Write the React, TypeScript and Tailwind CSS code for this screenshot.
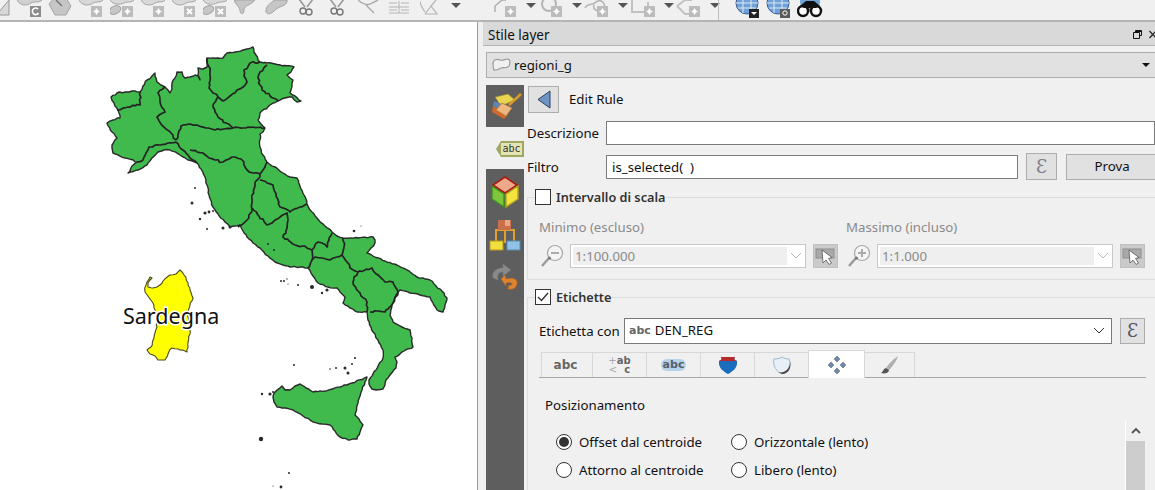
import React from "react";

const OUTLINE = "111,97 117,93 125,92 132,91 140,92 143,86 147,80 152,76 155,73 156,78 157,82 161,85 165,87 168,90 170,93 172,89 172,83 175,78 177,72 182,72 183,76 185,78 190,77 195,75 198,76 200,80 198,75 198,68 203,69 207,67 207,62 207,58 213,58 223,58 225,55 227,53 235,52 243,50 253,47 254,52 256,55 258,60 260,62 275,64 294,67 291,72 287,75 290,78 293,80 292,86 290,93 295,96 301,101 297,102 292,97 285,98 278,101 270,105 260,113 258,120 261,124 265,128 263,132 260,134 260,147 263,155 267,162 275,167 283,173 290,177 297,178 300,186 304,195 307,204 312,212 317,218 325,226 332,232 337,236 343,238 358,238 373,237 375,240 375,243 371,248 367,253 373,256 385,261 397,265 407,270 417,277 425,279 430,280 436,286 442,291 447,298 445,305 443,312 437,310 433,303 430,297 420,295 410,293 405,291 400,290 396,295 393,303 390,315 393,322 400,326 410,330 412,338 413,347 404,351 395,357 397,362 396,368 390,375 386,380 385,385 383,389 376,390 372,389 369,384 369,380 376,370 383,358 383,350 378,340 373,332 368,320 367,312 357,312 350,308 343,303 345,297 340,292 337,288 328,287 318,283 313,276 308,268 300,267 290,267 283,265 275,262 268,256 260,248 253,243 247,237 243,231 240,225 235,226 230,227 225,222 218,214 213,207 209,195 207,185 205,177 201,169 197,163 188,160 180,155 170,150 164,150 158,152 152,158 147,165 138,170 128,173 132,166 137,162 125,158 113,153 112,148 112,145 117,138 112,132 107,123 113,120 120,118 119,113 118,110 114,103 111,97";

const BORDERS = [
  "117,110 128,107 140,105 140,92",
  "165,87 158,93 160,102 165,112 157,117 161,124 165,128 171,133 176,140",
  "176,142 168,143 160,145 149,147 146,153 143,160 137,162",
  "176,142 183,150 190,158 197,163",
  "176,140 179,131 183,125 190,124 197,125 206,128 215,130 224,129 233,128",
  "207,58 210,72 209,88 213,93 218,97 223,101 230,96 237,90 243,87 247,82 244,76 244,70 250,63 260,62",
  "218,97 213,107 215,112 218,117 226,123 233,128",
  "267,65 260,72 258,78 260,85 262,90 270,96 278,101",
  "233,128 243,128 253,127 265,128",
  "190,150 197,152 203,153 209,158 215,160 223,162 229,159 235,157 241,159 244,162 245,167 247,170 253,173 260,174 263,170 265,167 267,162",
  "260,174 255,185 252,195 252,203 252,210 247,220 238,227",
  "260,180 267,183 273,185 276,196 280,207 286,209 290,212 300,207 307,204",
  "252,208 259,216 267,225 277,219 287,213 288,220 287,228 283,237 289,241 295,245 303,246 312,250 312,260 308,268",
  "332,233 329,240 327,247 322,243 318,242 312,250",
  "343,238 344,247 342,255 337,257 330,260 322,258 315,257 312,260",
  "342,255 347,262 350,268 358,272 354,277 353,282 358,291 367,302 367,312",
  "358,272 365,270 372,268 378,275 385,282 393,282 396,288 398,293 393,303 385,312 378,311 370,312",
];

const SICILY = "273,397 275,392 282,386 285,390 290,390 295,386 300,384 306,388 313,392 325,391 340,387 352,383 367,377 362,390 358,403 355,415 359,419 363,425 360,432 357,439 348,440 340,437 335,431 330,425 322,424 313,422 303,416 293,410 285,408 277,407 274,402";
const SARDINIA = "145,292 146,285 147,282 150,277 152,278 148,283 148,287 153,288 157,287 163,281 170,275 176,274 180,270 184,275 188,283 190,290 193,298 190,305 188,312 189,322 190,330 188,342 187,352 180,350 172,348 168,354 165,360 158,360 155,356 153,355 150,354 147,350 151,347 153,340 155,333 157,327 157,315 153,303";
const DOTS: [number, number, number][] = [[195,188,1],[192,203,1.5],[205,213,1.6],[209,212,1.4],[213,211,1],[200,219,1.2],[207,229,1],[223,228,1.5],[230,227,1.5],[268,244,1],[274,250,1],[354,231,1.3],[361,226,0.6],[281,281,1],[284,281,1],[287,279,0.7],[288,284,0.6],[298,285,1],[312,287,2],[322,293,1.2],[327,290,1.6],[294,365,1],[330,369,0.8],[336,368,1],[345,368,1.5],[348,373,1.5],[352,364,1],[355,358,1.1],[262,394,1.2],[270,394,1.6],[273,392,1],[261,439,2.2],[289,473,1],[281,487,1.4],[273,486,0.6]];

function jag(points: string, amp: number) {
  const pts = points.split(" ").map((p) => p.split(",").map(Number));
  const out: string[] = [];
  let seed = pts[0][0] * 7 + pts[0][1] * 13;
  const rnd = () => {
    seed = (seed * 9301 + 49297) % 233280;
    return seed / 233280 - 0.5;
  };
  pts.forEach((p, i) => {
    out.push(`${p[0]},${p[1]}`);
    const q = pts[i + 1];
    if (!q) return;
    const d = Math.hypot(q[0] - p[0], q[1] - p[1]);
    const n = Math.floor(d / 2.4);
    for (let k = 1; k < n; k++) {
      const t = k / n;
      out.push(`${(p[0] + (q[0] - p[0]) * t + rnd() * amp).toFixed(1)},${(p[1] + (q[1] - p[1]) * t + rnd() * amp).toFixed(1)}`);
    }
  });
  return out.join(" ");
}

function ItalyMap() {
  return (
    <svg viewBox="0 22 477 468" className="block w-full h-full">
      <polygon points={jag(OUTLINE, 1.3)} fill="#40ba4d" stroke="#2a2a2a" strokeWidth="1.4" strokeLinejoin="round" />
      {BORDERS.map((p, i) => (
        <polyline key={i} points={jag(p, 2)} fill="none" stroke="#232323" strokeWidth="1.7" strokeLinejoin="round" />
      ))}
      <polygon points={jag(SICILY, 1.2)} fill="#40ba4d" stroke="#2a2a2a" strokeWidth="1.4" strokeLinejoin="round" />
      <polygon points={jag(SARDINIA, 1.6)} fill="#ffff00" stroke="#4a4a20" strokeWidth="1.1" strokeLinejoin="round" />
      {DOTS.map(([x, y, r], i) => (
        <circle key={i} cx={x} cy={y} r={r} fill="#2a2a2a" />
      ))}
      <text x="123" y="323.5" stroke="#ffffff" strokeWidth="3" paintOrder="stroke" fill="#111111" className="font-['Noto_Sans',sans-serif] text-[21.5px]">Sardegna</text>
    </svg>
  );
}

const G = "#c6c6c6";
const S = "#a4a4a4";

function Badge({ x, kind, dark }: { x: number; kind: "star" | "x" | "arrow"; dark?: boolean }) {
  return (
    <g>
      <rect x={x} y="6" width="11" height="11" fill={dark ? "#8c8c8c" : "#bcbcbc"} />
      {kind === "star" && <path d={`M${x + 5.5} 8 L${x + 7} 10.5 L${x + 9} 11.5 L${x + 7} 12.5 L${x + 5.5} 15 L${x + 4} 12.5 L${x + 2} 11.5 L${x + 4} 10.5Z`} fill="#ffffff" />}
      {kind === "x" && <path d={`M${x + 3} 9 L${x + 8} 14 M${x + 8} 9 L${x + 3} 14`} stroke="#ffffff" strokeWidth="2" />}
      {kind === "arrow" && <path d={`M${x + 8} 9 A3.3 3.3 0 1 0 ${x + 8.5} 13`} stroke="#ffffff" strokeWidth="1.6" fill="none" />}
    </g>
  );
}

function ToolIcon({ type }: { type: number }) {
  return (
    <div className="w-[31px] h-[20px] shrink-0">
      <svg width="31" height="20" viewBox="0 0 31 20" className="block">
        {type === 0 && (<><path d="M0 0 C3 6 10 6 14 3 C18 1 22 3 25 0" fill="#d0d0d0" stroke={S} /><Badge x={13} kind="arrow" dark /></>)}
        {type === 1 && (<><path d="M1 4 L6 -2 L18 -2 L23 6 L18 15 L7 15Z" fill={G} stroke={S} /><path d="M8 0 L14 6" stroke="#777" strokeWidth="1.5" /></>)}
        {(type === 2 || type === 4 || type === 5) && (<><path d="M0 0 C3 6 10 6 14 3 C18 1 22 3 24 0" fill="#d8d8d8" stroke={S} /><Badge x={12} kind={type === 5 ? "x" : "star"} /></>)}
        {(type === 3 || type === 6) && (<><path d="M0 0 C3 5 10 5 14 3 C18 1 22 3 24 0" fill="#d8d8d8" stroke={S} /><ellipse cx="5" cy="10" rx="6" ry="4" transform="rotate(-25 5 10)" fill={G} stroke={S} /><Badge x={12} kind={type === 3 ? "star" : "x"} /></>)}
        {type === 7 && <path d="M0 0 C1 4 5 6 6 10 C6 15 10 15 10 10 C10 5 16 6 21 0Z" fill={G} stroke={S} />}
        {type === 8 && <path d="M22 0 C23 6 14 6 10 10 C6 15 0 15 1 10 C2 4 7 3 9 0Z" fill={G} stroke={S} />}
        {type === 9 && (<><path d="M3 -1 L9 7 M17 -1 L11 7" stroke="#999" strokeWidth="1.6" /><circle cx="7" cy="11" r="3" fill="none" stroke="#777" strokeWidth="1.4" /><circle cx="13" cy="12" r="3" fill="none" stroke="#777" strokeWidth="1.4" /></>)}
        {type === 10 && <path d="M0 0 C4 4 10 6 14 3 L20 0 M8 5 L16 13" fill="none" stroke="#aaa" strokeWidth="1.4" />}
        {type === 11 && <path d="M0 3 H8 M12 3 H20 M0 7 H20 M0 10 H8 M12 10 H20 M0 13 H20 M10 1 V13" fill="none" stroke="#b4b4b4" />}
        {type === 12 && <path d="M0 1 C0 5 3 9 5 12 M5 14 H17 L11 6 L16 0 M5 14 L11 6" fill="none" stroke="#b4b4b4" strokeWidth="1.2" />}
      </svg>
    </div>
  );
}

function Caret() {
  return <div className="w-0 h-0 border-x-[5px] border-x-transparent border-t-[5px] border-t-[#555555]" />;
}

function NodeTool({ type }: { type: number }) {
  return (
    <div className="w-[46px] h-[20px] shrink-0 flex items-start">
      <svg width="33" height="20" viewBox="0 0 33 20" className="block shrink-0">
        {type === 0 && <path d="M3 12 V6 L10 0 H14" fill="none" stroke="#aaa" strokeWidth="1.4" />}
        {type === 1 && <circle cx="11" cy="4" r="7" fill="none" stroke="#b5b5b5" strokeWidth="2" />}
        {type === 2 && <path d="M1 8 C4 2 9 6 12 2 C16 -1 22 2 20 8 C18 12 8 12 10 5" fill="none" stroke="#b5b5b5" strokeWidth="1.6" />}
        {type === 3 && <path d="M2 0 V12 H18 V2" fill="none" stroke="#c2c2c2" strokeWidth="2" />}
        {type === 4 && <path d="M1 6 L9 0 H16 M1 6 L9 14 H16" fill="none" stroke="#c2c2c2" strokeWidth="2" />}
        <Badge x={type === 0 ? 13 : type === 3 ? 14 : 13} kind="star" />
      </svg>
      <div className="ml-[1px] mt-[3px]"><Caret /></div>
    </div>
  );
}

function Globe({ badge }: { badge: "down" | "zoom" }) {
  return (
    <svg width="25" height="20" viewBox="0 0 25 20" className="block shrink-0">
      <circle cx="12" cy="3" r="11" fill="#6fa0d8" stroke="#3b5e8c" />
      <path d="M1 3 H23 M3 -2 H21 M3 8 H21 M8 -6 V13 M16 -6 V13" stroke="#dfeaf6" strokeWidth="1" />
      <rect x="14" y="9" width="10" height="9" fill={badge === "down" ? "#222" : "#5a5a5a"} />
      {badge === "down" ? <path d="M16 12 H22 L19 15Z" fill="#fff" /> : <circle cx="19" cy="13" r="2.2" fill="none" stroke="#fff" />}
    </svg>
  );
}

function Toolbar() {
  return (
    <div className="h-[22px] shrink-0 flex bg-[#f0f0f0] border-b-2 border-[#b4b4b4] overflow-hidden">
      <svg width="17" height="20" viewBox="0 0 17 20" className="block shrink-0">
        <path d="M-1 12 L9 0 V15 H-1Z" fill="#d8d8d8" stroke="#999" />
      </svg>
      {[0, 1, 2, 3, 4, 5, 6, 7, 8, 9, 9, 10, 11, 12].map((t, i) => (
        <ToolIcon key={i} type={t} />
      ))}
      <div className="w-[28px] pt-[3px]"><Caret /></div>
      <div className="w-[13px]" />
      {[0, 1, 2, 3, 4].map((t) => (
        <NodeTool key={t} type={t} />
      ))}
      <div className="w-[1px] h-[20px] bg-[#bdbdbd] -ml-[4px]" />
      <div className="flex gap-[6px] ml-[16px]">
        <Globe badge="down" />
        <Globe badge="zoom" />
        <svg width="26" height="20" viewBox="0 0 26 20" className="block shrink-0">
          <circle cx="13" cy="2" r="10" fill="#6fa0d8" />
          <circle cx="6" cy="11" r="5" fill="#fff" stroke="#111" strokeWidth="2.4" />
          <circle cx="19" cy="11" r="5" fill="#fff" stroke="#111" strokeWidth="2.4" />
          <path d="M3 6 L9 1 H17 L23 6 L19 8 H7Z" fill="#111" />
        </svg>
      </div>
    </div>
  );
}

function BrushIcon() {
  return (
    <svg width="34" height="30" viewBox="0 0 34 30">
      <path d="M7 6 L20 3 L27 9 L13 15Z" fill="#e8d44f" stroke="#8a8030" strokeWidth="0.6" />
      <path d="M6 10 L16 14 L12 19 L5 15Z" fill="#5e86b4" />
      <path d="M5 15 L20 24 L16 28 L4 21Z" fill="#cf6a2c" />
      <path d="M14 12 L24 17 L18 25 L8 19Z" fill="#edb77e" stroke="#b87a3c" strokeWidth="0.8" />
      <path d="M21 14 L33 3" stroke="#d99a2b" strokeWidth="2.6" />
    </svg>
  );
}

function CubeIcon() {
  return (
    <svg width="28" height="32" viewBox="0 0 28 32">
      <path d="M14 1 L26 9 L14 17 L2 9Z" fill="#eda98a" stroke="#a81d12" strokeWidth="1.6" />
      <path d="M1 10 L13 18 V31 L1 23Z" fill="#7ec63c" stroke="#3f8f1f" strokeWidth="1.4" />
      <path d="M27 10 L15 18 V31 L27 23Z" fill="#f4e33c" stroke="#b0a020" strokeWidth="1.4" />
    </svg>
  );
}

function HierIcon() {
  return (
    <svg width="32" height="32" viewBox="0 0 32 32">
      <path d="M7 22 V11 H25 V22 M16 11 V24" fill="none" stroke="#e0a030" strokeWidth="2" />
      <rect x="9" y="1" width="13" height="10" fill="#c9704a" />
      <rect x="16" y="1" width="5" height="6" fill="#e8a888" />
      <rect x="1" y="22" width="13" height="9" fill="#f0df3c" stroke="#b79a20" />
      <rect x="18" y="22" width="13" height="9" fill="#8ec2e6" stroke="#5a8ab0" />
    </svg>
  );
}

function UndoIcon() {
  return (
    <svg width="28" height="28" viewBox="0 0 28 28">
      <path d="M2 16 C0 8 8 6 12 6 L12 2 L20 8 L12 14 L12 10 C8 10 6 12 7 18 Z" fill="#8a8a8a" stroke="#777" strokeWidth="0.6" />
      <path d="M10 17 L14 13 L15 17 C22 15 27 17 26 22 C25 27 20 28 17 27 L18 23 C21 24 22 22 20 21 C18 20 16 21 15 21 L15 24Z" fill="#dd8430" stroke="#b8651c" strokeWidth="0.6" />
    </svg>
  );
}

function Sidebar() {
  return (
    <div className="w-[38px] shrink-0 flex flex-col">
      <div className="h-[42px] bg-[#5e5e5e] flex items-center justify-center"><BrushIcon /></div>
      <div className="h-[42px] flex items-center justify-end pt-[1px]">
        <div className="flex items-center">
          <div className="w-0 h-0 border-y-[8px] border-y-transparent border-r-[5px] border-r-[#9ea860]" />
          <div className="w-[23px] h-[16px] bg-[#e3e3b4] border-2 border-l-0 border-[#9ea860] text-[10px] leading-[12px] text-center text-[#333333] font-['DejaVu_Sans_Mono',monospace]">abc</div>
        </div>
      </div>
      <div className="flex-1 bg-[#5e5e5e] flex flex-col items-center pt-[7px] gap-[11px]">
        <CubeIcon />
        <HierIcon />
        <UndoIcon />
      </div>
    </div>
  );
}

function Eps({ disabled }: { disabled?: boolean }) {
  return (
    <span className={`font-['DejaVu_Serif',serif] text-[18px] leading-none ${disabled ? "text-[#80808f]" : "text-[#555566]"}`}>Ɛ</span>
  );
}

function Arrow() {
  return (
    <svg width="14" height="19" viewBox="0 0 14 19">
      <path d="M1 9.5 L13 1 V18Z" fill="#6d94c4" stroke="#2b3f5c" strokeWidth="1" strokeLinejoin="round" />
    </svg>
  );
}

function Check() {
  return (
    <div className="w-[16px] h-[16px] bg-white border border-[#333333] flex items-center justify-center">
      <svg width="12" height="10" viewBox="0 0 12 10">
        <path d="M1 5 L4.5 8.5 L11 1" fill="none" stroke="#333333" strokeWidth="1.4" />
      </svg>
    </div>
  );
}

function Mag({ plus }: { plus?: boolean }) {
  return (
    <svg width="24" height="24" viewBox="0 0 24 24" className="block">
      <circle cx="15" cy="9" r="7.5" fill="#f4f4f4" stroke="#a8a8a8" strokeWidth="1.2" />
      <path d="M11 9 H19" stroke="#aaaaaa" strokeWidth="2" />
      {plus && <path d="M15 5 V13" stroke="#aaaaaa" strokeWidth="2" />}
      <path d="M9 14 L2 22" stroke="#999999" strokeWidth="2.4" />
      <circle cx="9.5" cy="14" r="1.5" fill="#777" />
    </svg>
  );
}

function PickBtn() {
  return (
    <div className="w-[25px] h-[24px] bg-[#cacaca] border border-[#c0c0c0] flex items-center justify-center shrink-0">
      <svg width="21" height="18" viewBox="0 0 21 18">
        <rect x="1" y="2" width="18" height="9" fill="#a9a9a9" stroke="#8e8e8e" />
        <path d="M7 3 L8 16 L11 13 L14 17.5 L16.5 16 L13.5 11.5 L17 10.5Z" fill="#fff" stroke="#555" strokeWidth="0.8" />
      </svg>
    </div>
  );
}

function ScaleField({ label, value, plus }: { label: string; value: string; plus?: boolean }) {
  return (
    <div>
      <div className="text-[13.25px] leading-[18px] text-[#8a8a8a] mb-[8px]">{label}</div>
      <div className="flex items-center">
        <div className="w-[31px] shrink-0 pl-[1px]"><Mag plus={plus} /></div>
        <div className="w-[236px] h-[24px] bg-white border border-[#c8c8c8] p-[2px] flex items-center shrink-0">
          <div className="w-[214px] h-[18px] bg-[#efefef] text-[13.25px] leading-[18px] text-[#8a8a8a] pl-[2px]">{value}</div>
          <svg width="12" height="8" viewBox="0 0 12 8" className="ml-[3px]"><path d="M1 1 L6 6 L11 1" fill="none" stroke="#b8b8b8" /></svg>
        </div>
        <div className="ml-[7px]"><PickBtn /></div>
      </div>
    </div>
  );
}

function Tabs() {
  const base = "h-[25px] border border-b-0 border-[#d8d8d8] bg-[#f0f0f0] flex items-center justify-center -mr-[1px] shrink-0";
  return (
    <div className="flex items-end h-[28px] border-b border-[#a8a8a8] mt-[6px] pl-[2px]">
      <div className={`${base} w-[52px] pr-[3px] text-[12px] font-bold text-[#666666] font-['DejaVu_Sans',sans-serif]`}>abc</div>
      <div className={`${base} w-[55px]`}>
        <div className="flex flex-col items-center text-[10px] leading-[9px] font-bold text-[#666666] font-['DejaVu_Sans',sans-serif]">
          <span><span className="font-normal text-[#aaaaaa]">+</span>ab</span>
          <span><span className="font-normal text-[#aaaaaa]">&lt;</span>&nbsp;&nbsp;c</span>
        </div>
      </div>
      <div className={`${base} w-[55px]`}>
        <span className="text-[11px] leading-[12px] font-bold text-[#555f6a] bg-[#b4d3ea] rounded-full px-[2px] font-['DejaVu_Sans',sans-serif]">abc</span>
      </div>
      <div className={`${base} w-[55px]`}>
        <svg width="20" height="19" viewBox="0 0 20 19">
          <path d="M1 5 C4 4 4 3 3 1 H17 C16 3 16 4 19 5 C20 12 14 16 10 18 C6 16 0 12 1 5Z" fill="#1a6cbd" />
          <path d="M1 5 C4 4 4 3 3 1 H17 C16 3 16 4 19 5Z" fill="#b82a2a" />
        </svg>
      </div>
      <div className={`${base} w-[55px]`}>
        <svg width="20" height="19" viewBox="0 0 20 19">
          <path d="M2 3 C6 3 9 2 10 1 C12 2 14 3 17 3 C20 10 14 17 10 18 C6 17 0 10 2 3Z" fill="#e8eff6" stroke="#9cb8d0" />
          <path d="M6 16 C12 18 19 13 18 5 C20 12 16 18 10 18Z" fill="#444444" />
        </svg>
      </div>
      <div className="h-[28px] w-[57px] border border-b-0 border-[#d8d8d8] bg-white flex items-center justify-center -mr-[1px] -mb-[1px] shrink-0 relative z-10">
        <svg width="20" height="20" viewBox="0 0 20 20">
          <path d="M10 1 L13 4 L10 7 L7 4Z M10 13 L13 16 L10 19 L7 16Z M1 10 L4 7 L7 10 L4 13Z M13 10 L16 7 L19 10 L16 13Z" fill="#6f86a4" stroke="#55677f" strokeWidth="0.5" />
        </svg>
      </div>
      <div className={`${base} w-[51px]`}>
        <svg width="18" height="20" viewBox="0 0 18 20">
          <path d="M17 1 C14 3 8 8 5 13 L8 15 C12 11 16 5 17 1Z" fill="#b0b0b0" />
          <path d="M5 13 C2 14 2 17 0 18 C4 19 8 18 8 15Z" fill="#555555" />
        </svg>
      </div>
    </div>
  );
}

function Radio({ on, label }: { on?: boolean; label: string }) {
  return (
    <div className="flex items-center gap-[7px]">
      <div className="w-[16px] h-[16px] rounded-full bg-white border border-[#333333] flex items-center justify-center">
        {on && <div className="w-[10px] h-[10px] rounded-full bg-[#333333]" />}
      </div>
      <span className="text-[13.25px] leading-[18px] text-[#111111]">{label}</span>
    </div>
  );
}

function Legend({ checked, label }: { checked?: boolean; label: string }) {
  return (
    <legend className="-ml-[4px] pr-[1px] flex items-center gap-[5px]">
      {checked ? <Check /> : <div className="w-[16px] h-[16px] bg-white border border-[#333333]" />}
      <span className="text-[12.7px] leading-[16px] font-semibold text-[#333333]">{label}</span>
    </legend>
  );
}

function Field({ w, children }: { w: string; children?: React.ReactNode }) {
  return <div className={`${w} h-[24px] shrink-0 bg-white border border-[#7a7a7a] text-[13.25px] leading-[22px] pl-[5px] text-[#111111] whitespace-pre`}>{children}</div>;
}

export default function App() {
  return (
    <div className="w-[1155px] h-[490px] overflow-hidden flex flex-col bg-[#f0f0f0] font-['Noto_Sans',sans-serif]">
      <Toolbar />
      <div className="flex flex-1 min-h-0">
        <div className="w-[478px] shrink-0 bg-white border-r border-[#9a9a9a]"><ItalyMap /></div>
        <div className="flex-1 min-w-0 flex flex-col pl-[5px] overflow-hidden">
          <div className="h-[24px] shrink-0 bg-[#d9d9d9] border-b border-[#b4b4b4] flex items-center justify-between pl-[5px]">
            <span className="text-[13.5px] text-[#111111] pt-[3px]">Stile layer</span>
            <div className="flex items-center gap-[7px] -mr-[1px] pt-[2px]">
              <svg width="9" height="9" viewBox="0 0 9 9"><path d="M2.5 2.5 V0.5 H8.5 V5.5 H6.5 M0.5 2.5 H6.5 V8.5 H0.5Z M2.5 1.5 H8.5" fill="none" stroke="#111" /></svg>
              <svg width="7" height="9" viewBox="0 0 7 9" className="block"><path d="M0.5 1 L7 8 M7 1 L0.5 8" stroke="#222" strokeWidth="1.2" /></svg>
            </div>
          </div>
          <div className="pl-[3px] mt-[6px] flex-1 min-h-0 flex flex-col">
            <div className="h-[26px] shrink-0 bg-[#e1e1e1] border border-[#adadad] border-r-0 flex items-center pl-[5px] pr-[5px]">
              <svg width="19" height="14" viewBox="0 0 19 14" className="shrink-0">
                <path d="M1 6 C1 1 5 1 8 2 C11 3 13 1 16 1 C19 2 18 6 17 8 C15 11 12 9 9 10 C6 11 4 13 2 12 C1 10 1 8 1 6Z" fill="#f0f0f0" stroke="#9a9a9a" strokeWidth="1.2" />
              </svg>
              <span className="text-[13.25px] ml-[3px] pt-[2px] text-[#111111] flex-1">regioni_g</span>
              <div className="w-0 h-0 border-x-[4px] border-x-transparent border-t-[4px] border-t-[#111111]" />
            </div>
            <div className="flex flex-1 min-h-0 mt-[7px]">
              <Sidebar />
              <div className="flex-1 min-w-0 pl-[3px] flex flex-col">
                <div className="flex items-center h-[27px] mt-[1px] shrink-0">
                  <div className="w-[31px] h-[27px] ml-[1px] bg-[#e1e1e1] border border-[#adadad] flex items-center justify-center"><Arrow /></div>
                  <span className="ml-[10px] text-[13.25px] text-[#111111]">Edit Rule</span>
                </div>
                <div className="flex items-center mt-[8px] shrink-0">
                  <span className="w-[79px] shrink-0 pt-[2px] text-[13.25px] text-[#111111]">Descrizione</span>
                  <Field w="w-[549px]" />
                </div>
                <div className="flex items-center mt-[8px] shrink-0">
                  <span className="w-[79px] shrink-0 pt-[2px] text-[13.25px] text-[#111111]">Filtro</span>
                  <Field w="w-[412px]">is_selected(  )</Field>
                  <div className="w-[31px] h-[27px] ml-[8px] shrink-0 bg-[#e1e1e1] border border-[#adadad] flex items-center justify-center"><Eps disabled /></div>
                  <div className="w-[92px] h-[26px] ml-[9px] shrink-0 bg-[#e1e1e1] border border-[#adadad] flex items-center justify-center pt-[1px] text-[13.25px] text-[#111111]">Prova</div>
                </div>
                <fieldset className="w-[630px] h-[91px] mt-[9px] shrink-0 border border-[#dcdcdc] pl-[11px] pr-[10px]">
                  <Legend label="Intervallo di scala" />
                  <div className="grid grid-cols-[307px_1fr] mt-[13px]">
                    <ScaleField label="Minimo (escluso)" value="1:100.000" />
                    <ScaleField label="Massimo (incluso)" value="1:1.000" plus />
                  </div>
                </fieldset>
                <fieldset className="w-[630px] flex-1 min-h-0 mt-[9px] shrink-0 border border-[#dcdcdc] border-b-0 pl-[11px] pr-[10px]">
                  <Legend checked label="Etichette" />
                  <div className="flex items-center mt-[13px]">
                    <span className="w-[85px] shrink-0 pt-[2px] text-[13.25px] text-[#111111]">Etichetta con</span>
                    <div className="w-[488px] h-[26px] shrink-0 bg-white border border-[#7a7a7a] flex items-center pl-[4px] pr-[6px]">
                      <span className="text-[11px] font-bold text-[#666666] font-['DejaVu_Sans',sans-serif]">abc</span>
                      <span className="ml-[4px] text-[13.25px] text-[#111111] flex-1">DEN_REG</span>
                      <svg width="12" height="8" viewBox="0 0 12 8"><path d="M1 1 L6 6 L11 1" fill="none" stroke="#333333" /></svg>
                    </div>
                    <div className="w-[25px] h-[26px] ml-[8px] shrink-0 bg-[#e1e1e1] border border-[#adadad] flex items-center justify-center"><Eps /></div>
                  </div>
                  <Tabs />
                  <div className="pl-[6px] mt-[18px] text-[13.25px] leading-[18px] text-[#111111]">Posizionamento</div>
                  <div className="flex items-start">
                    <div className="flex-1 grid grid-cols-[175px_1fr] gap-y-[10px] pl-[17px] pt-[19px]">
                      <Radio on label="Offset dal centroide" />
                      <Radio label="Orizzontale (lento)" />
                      <Radio label="Attorno al centroide" />
                      <Radio label="Libero (lento)" />
                    </div>
                    <div className="w-[20px] h-[80px] mt-[6px] mr-[1px] shrink-0 flex flex-col border-l border-white">
                      <div className="h-[21px] flex items-center justify-center">
                        <svg width="10" height="7" viewBox="0 0 10 7"><path d="M1 6 L5 2 L9 6" fill="none" stroke="#555555" strokeWidth="1.8" /></svg>
                      </div>
                      <div className="flex-1 bg-[#cdcdcd]" />
                    </div>
                  </div>
                </fieldset>
              </div>
            </div>
          </div>
        </div>
      </div>
    </div>
  );
}
